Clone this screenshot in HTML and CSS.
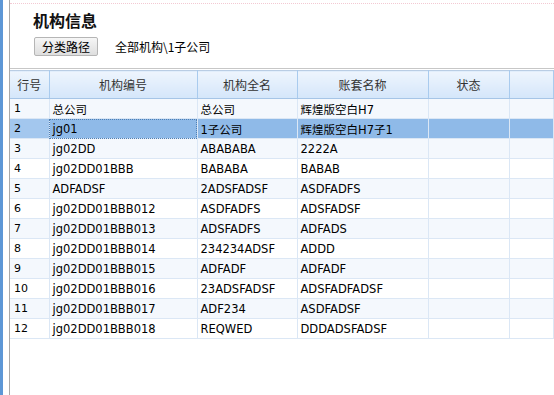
FILE: index.html
```html
<!DOCTYPE html>
<html lang="zh-CN">

<head>
    <meta charset="UTF-8">
    <title>机构信息</title>
    <link rel="stylesheet" href="styles.css">
</head>

<body>
    <div class="side"></div>
    <div class="main">
        <!-- Header Section -->
        <div class="head">
            <h2>机构信息</h2>
            <div class="path">
                <button type="button" class="path-btn">分类路径</button>
                <span class="path-text">全部机构\1子公司</span>
            </div>
        </div>

        <!-- Grid Section -->
        <div class="grid">
            <table>
                <colgroup>
                    <col class="c-no">
                    <col class="c-code">
                    <col class="c-name">
                    <col class="c-book">
                    <col class="c-state">
                    <col>
                </colgroup>
                <thead>
                    <tr>
                        <th>行号</th>
                        <th>机构编号</th>
                        <th>机构全名</th>
                        <th>账套名称</th>
                        <th>状态</th>
                        <th></th>
                    </tr>
                </thead>
                <tbody>
                    <tr class="alt"><td class="no">1</td><td>总公司</td><td>总公司</td><td>辉煌版空白H7</td><td></td><td></td></tr>
                    <tr class="selected"><td class="no">2</td><td class="focus">jg01</td><td>1子公司</td><td>辉煌版空白H7子1</td><td></td><td></td></tr>
                    <tr class="alt"><td class="no">3</td><td>jg02DD</td><td>ABABABA</td><td>2222A</td><td></td><td></td></tr>
                    <tr><td class="no">4</td><td>jg02DD01BBB</td><td>BABABA</td><td>BABAB</td><td></td><td></td></tr>
                    <tr class="alt"><td class="no">5</td><td>ADFADSF</td><td>2ADSFADSF</td><td>ASDFADFS</td><td></td><td></td></tr>
                    <tr><td class="no">6</td><td>jg02DD01BBB012</td><td>ASDFADFS</td><td>ADSFADSF</td><td></td><td></td></tr>
                    <tr class="alt"><td class="no">7</td><td>jg02DD01BBB013</td><td>ADSFADFS</td><td>ADFADS</td><td></td><td></td></tr>
                    <tr><td class="no">8</td><td>jg02DD01BBB014</td><td>234234ADSF</td><td>ADDD</td><td></td><td></td></tr>
                    <tr class="alt"><td class="no">9</td><td>jg02DD01BBB015</td><td>ADFADF</td><td>ADFADF</td><td></td><td></td></tr>
                    <tr><td class="no">10</td><td>jg02DD01BBB016</td><td>23ADSFADSF</td><td>ADSFADFADSF</td><td></td><td></td></tr>
                    <tr class="alt"><td class="no">11</td><td>jg02DD01BBB017</td><td>ADF234</td><td>ASDFADSF</td><td></td><td></td></tr>
                    <tr><td class="no">12</td><td>jg02DD01BBB018</td><td>REQWED</td><td>DDDADSFADSF</td><td></td><td></td></tr>
                </tbody>
            </table>
        </div>
    </div>
</body>

</html>
```

FILE: styles.css
```css
/* Global styles */
body {
    margin: 0;
    padding: 0;
    height: 395px;
    overflow: hidden;
    display: flex;
    background-color: #ffffff;
    font-family: 'DejaVu Sans', 'Noto Sans CJK SC', sans-serif;
    font-size: 11.5px;
    color: #000;
}

.side {
    width: 3px;
    background-color: #5d97d6;
    flex-shrink: 0;
}

.main {
    flex: 1;
    margin-left: 6px;
    border-left: 1px solid #a9a9a9;
    padding-top: 3px;
    display: flex;
    flex-direction: column;
}

/* Header */
.head {
    border-top: 1px dotted #f3c9d3;
    padding: 5px 0 12px 23px;
    border-bottom: 1px solid #c7c7c7;
}

h2 {
    margin: 0;
    font-family: 'Noto Sans CJK SC', sans-serif;
    font-size: 16px;
    line-height: 22px;
    font-weight: bold;
    color: #111;
}

.path {
    display: flex;
    align-items: center;
    margin-top: 6px;
    gap: 17px;
}

.path-btn {
    height: 19px;
    width: 64px;
    padding: 0;
    margin-left: 1px;
    font-family: 'Noto Sans CJK SC', sans-serif;
    font-size: 12px;
    line-height: 15px;
    color: #000;
    border: 1px solid #b5b5b5;
    border-radius: 2px;
    background: linear-gradient(#f6f6f6, #dedede);
}

.path-text {
    font-family: 'Noto Sans CJK SC', sans-serif;
    font-size: 12px;
}

/* Grid */
.grid {
    flex: 1;
    padding-top: 1px;
}

table {
    width: 100%;
    border-collapse: collapse;
    table-layout: fixed;
}

.c-no { width: 39px; }
.c-code { width: 148px; }
.c-name { width: 100px; }
.c-book { width: 131px; }
.c-state { width: 81px; }

th {
    height: 27px;
    padding: 0;
    font-family: 'Noto Sans CJK SC', sans-serif;
    font-size: 12px;
    font-weight: normal;
    color: #333;
    text-align: center;
    background: linear-gradient(#eef5fd, #d4e6fa);
    border-top: 1px solid #b9cde4;
    border-bottom: 1px solid #a6c5e7;
    border-right: 1px solid #a9cbee;
}

td {
    height: 19px;
    padding: 0 0 0 3px;
    white-space: nowrap;
    overflow: hidden;
    font-family: 'DejaVu Sans', 'Noto Sans CJK SC', sans-serif;
    border-right: 1px solid #dbe7f5;
    border-bottom: 1px solid #dbe7f5;
}

td.no {
    padding-left: 4px;
    font-size: 11px;
}

tr.alt td {
    background-color: #f4f8fd;
}

tr.selected td {
    background-color: #8fbae8;
}

tr.selected td.no {
    background-color: #a3c7ee;
}

td.focus {
    outline: 1px dotted #4f7fb4;
    outline-offset: -1px;
}
```
